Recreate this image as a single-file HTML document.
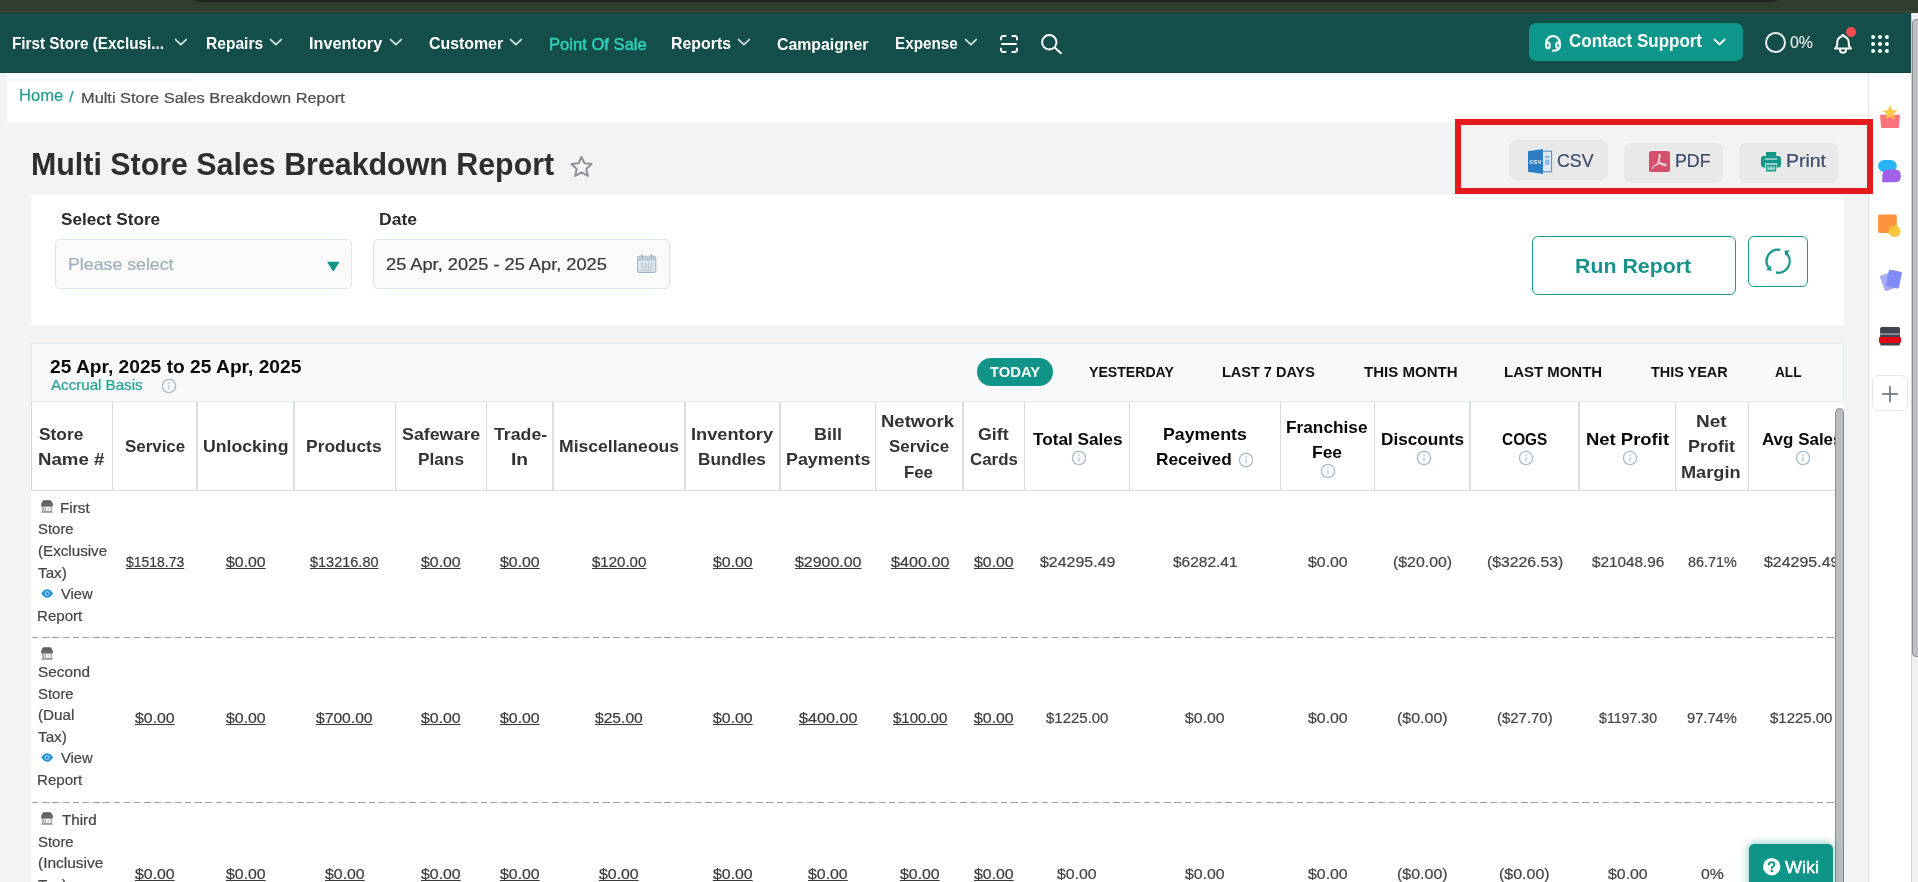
<!DOCTYPE html>
<html><head><meta charset="utf-8"><title>Multi Store Sales Breakdown Report</title>
<style>
*{box-sizing:border-box;margin:0;padding:0}
html,body{width:1918px;height:882px;overflow:hidden;background:#f3f3f3;font-family:"Liberation Sans",sans-serif;}
#root{position:relative;width:1918px;height:882px;overflow:hidden;will-change:transform}
.a{position:absolute}
.t{position:absolute;white-space:pre;line-height:1;transform-origin:0 0;display:block}
svg{position:absolute;overflow:visible}
</style></head><body><div id="root">
<div class="a" style="left:0;top:0;width:1918px;height:13px;background:#2f3d2c"></div>
<div class="a" style="left:192px;top:-6.5px;width:1588px;height:8.5px;background:#1b2519;border-radius:0 0 10px 10px"></div>
<div class="a" style="left:0;top:11px;width:1918px;height:1px;background:#42493f"></div>
<div class="a" style="left:0;top:13px;width:1911px;height:60px;background:#144e4a"></div>
<span class="t" style="left:12.14px;top:35.00px;font-size:17px;font-weight:bold;color:#fff;transform:scaleX(0.8992);">First Store (Exclusi...</span>
<span class="t" style="left:205.53px;top:35.00px;font-size:17px;font-weight:bold;color:#fff;transform:scaleX(0.9157);">Repairs</span>
<span class="t" style="left:308.68px;top:35.00px;font-size:17px;font-weight:bold;color:#fff;transform:scaleX(0.9568);">Inventory</span>
<span class="t" style="left:428.70px;top:35.00px;font-size:17px;font-weight:bold;color:#fff;transform:scaleX(0.9341);">Customer</span>
<span class="t" style="left:548.90px;top:36.00px;font-size:17px;font-weight:normal;color:#2fd3bd;transform:scaleX(0.9761);-webkit-text-stroke:0.45px #2fd3bd;">Point Of Sale</span>
<span class="t" style="left:671.21px;top:35.00px;font-size:17px;font-weight:bold;color:#fff;transform:scaleX(0.9347);">Reports</span>
<span class="t" style="left:777.21px;top:36.00px;font-size:17px;font-weight:bold;color:#fff;transform:scaleX(0.9305);">Campaigner</span>
<span class="t" style="left:894.65px;top:35.00px;font-size:17px;font-weight:bold;color:#fff;transform:scaleX(0.8971);">Expense</span>
<svg style="left:175.3px;top:39.2px" width="11.8" height="6.4" viewBox="0 0 11.8 6.4"><polyline points="0.6,0.6 5.9,5.6000000000000005 11.200000000000001,0.6" fill="none" stroke="#cddcda" stroke-width="1.9" stroke-linecap="round" stroke-linejoin="round"/></svg>
<svg style="left:270.3px;top:39.2px" width="11.8" height="6.4" viewBox="0 0 11.8 6.4"><polyline points="0.6,0.6 5.9,5.6000000000000005 11.200000000000001,0.6" fill="none" stroke="#cddcda" stroke-width="1.9" stroke-linecap="round" stroke-linejoin="round"/></svg>
<svg style="left:389.8px;top:39.2px" width="11.8" height="6.4" viewBox="0 0 11.8 6.4"><polyline points="0.6,0.6 5.9,5.6000000000000005 11.200000000000001,0.6" fill="none" stroke="#cddcda" stroke-width="1.9" stroke-linecap="round" stroke-linejoin="round"/></svg>
<svg style="left:510.3px;top:39.2px" width="11.8" height="6.4" viewBox="0 0 11.8 6.4"><polyline points="0.6,0.6 5.9,5.6000000000000005 11.200000000000001,0.6" fill="none" stroke="#cddcda" stroke-width="1.9" stroke-linecap="round" stroke-linejoin="round"/></svg>
<svg style="left:738.1px;top:39.2px" width="11.8" height="6.4" viewBox="0 0 11.8 6.4"><polyline points="0.6,0.6 5.9,5.6000000000000005 11.200000000000001,0.6" fill="none" stroke="#cddcda" stroke-width="1.9" stroke-linecap="round" stroke-linejoin="round"/></svg>
<svg style="left:965.1px;top:39.2px" width="11.8" height="6.4" viewBox="0 0 11.8 6.4"><polyline points="0.6,0.6 5.9,5.6000000000000005 11.200000000000001,0.6" fill="none" stroke="#cddcda" stroke-width="1.9" stroke-linecap="round" stroke-linejoin="round"/></svg>
<svg style="left:1000px;top:35px" width="18" height="18" viewBox="0 0 18 18" fill="none" stroke="#fff" stroke-width="1.9" stroke-linecap="round" stroke-linejoin="round"><path d="M1 4.6V3.4Q1 1 3.4 1H5.6M12.4 1H14.6Q17 1 17 3.4V4.6M17 13.4V14.6Q17 17 14.6 17H12.4M5.6 17H3.4Q1 17 1 14.6V13.4M2 9H16"/></svg>
<svg style="left:1041px;top:33.6px" width="21" height="20" viewBox="0 0 21 20" fill="none" stroke="#fff" stroke-width="2" stroke-linecap="round"><circle cx="8.3" cy="8.3" r="7.2"/><path d="M13.6 13.6L20 19.2"/></svg>
<div class="a" style="left:1529px;top:22.7px;width:214px;height:38px;background:#0f968a;border-radius:7px"></div>
<svg style="left:1545px;top:34.7px" width="16" height="17" viewBox="0 0 16 17" fill="none" stroke="#fff" stroke-linecap="round" stroke-linejoin="round"><path d="M1.3 9V7.7A6.7 6.7 0 0 1 14.7 7.7V9" stroke-width="2.2"/><rect x="1.15" y="7.5" width="3.5" height="5.7" rx="1.75" stroke-width="2"/><rect x="11.35" y="7.5" width="3.5" height="5.7" rx="1.75" stroke-width="2"/><path d="M14.2 13.4Q13.4 15.7 7.7 15.7" stroke-width="1.9"/></svg>
<span class="t" style="left:1569.27px;top:32.00px;font-size:18px;font-weight:bold;color:#fff;transform:scaleX(0.9435);">Contact Support</span>
<svg style="left:1713.7px;top:39.4px" width="11.2" height="6.2" viewBox="0 0 11.2 6.2"><polyline points="0.6,0.6 5.6,5.4 10.6,0.6" fill="none" stroke="#fff" stroke-width="2" stroke-linecap="round" stroke-linejoin="round"/></svg>
<div class="a" style="left:1765px;top:32.2px;width:21px;height:21px;border:2.7px solid #eceff3;border-radius:50%"></div>
<span class="t" style="left:1789.60px;top:34.00px;font-size:16.4px;font-weight:normal;color:#dde4e2;transform:scaleX(0.9691);-webkit-text-stroke:0.2px #dde4e2;">0%</span>
<svg style="left:1834px;top:32.6px" width="18" height="21" viewBox="0 0 18 21" fill="none" stroke="#fff" stroke-width="2" stroke-linecap="round" stroke-linejoin="round"><path d="M1.1 15.5L3.2 12.6V9.8C3.2 6.6 5 4.4 7.6 3.5C7.5 1.5 10.3 1.5 10.2 3.5C12.9 4.4 14.8 6.6 14.8 9.8V12.6L16.9 15.5Z"/><path d="M5.9 16.7A3.1 3.1 0 0 0 12.1 16.7" stroke-width="1.9"/></svg>
<div class="a" style="left:1845.6px;top:26.6px;width:10.8px;height:10.8px;background:#f84b50;border-radius:50%"></div>
<svg style="left:0;top:0" width="1918" height="80" viewBox="0 0 1918 80" fill="#fff"><circle cx="1873.1" cy="37.1" r="2"/><circle cx="1873.1" cy="44" r="2"/><circle cx="1873.1" cy="51" r="2"/><circle cx="1880" cy="37.1" r="2"/><circle cx="1880" cy="44" r="2"/><circle cx="1880" cy="51" r="2"/><circle cx="1886.9" cy="37.1" r="2"/><circle cx="1886.9" cy="44" r="2"/><circle cx="1886.9" cy="51" r="2"/></svg>
<div class="a" style="left:7px;top:72.8px;width:1862px;height:49.2px;background:#fff"></div>
<div class="a" style="left:193px;top:73px;width:1675px;height:5px;background:linear-gradient(rgba(0,0,0,0.04),rgba(0,0,0,0))"></div><div class="a" style="left:7px;top:79px;width:186px;height:5px;background:linear-gradient(rgba(0,0,0,0.035),rgba(0,0,0,0))"></div><div class="a" style="left:0;top:71.8px;width:1911px;height:1.2px;background:#10433f"></div>
<span class="t" style="left:18.50px;top:88.00px;font-size:15.6px;font-weight:normal;color:#219f94;transform:scaleX(1.0638);-webkit-text-stroke:0.22px #219f94;">Home</span>
<span class="t" style="left:69.40px;top:89.00px;font-size:15.4px;font-weight:normal;color:#219f94;transform:scaleX(1.0620);-webkit-text-stroke:0.22px #219f94;">/</span>
<span class="t" style="left:80.52px;top:90.00px;font-size:15.4px;font-weight:normal;color:#4d4d4d;transform:scaleX(1.0632);-webkit-text-stroke:0.22px #4d4d4d;">Multi Store Sales Breakdown Report</span>
<span class="t" style="left:31.30px;top:149.00px;font-size:30.5px;font-weight:bold;color:#2e2e2e;transform:scaleX(0.9957);">Multi Store Sales Breakdown Report</span>
<svg style="left:570px;top:155.3px" width="23" height="22.6" viewBox="0 0 23 22" fill="none" stroke="#8b9098" stroke-width="2" stroke-linejoin="round"><path d="M11.5 1.5L14.5 8L21.6 8.8L16.3 13.6L17.8 20.6L11.5 17L5.2 20.6L6.7 13.6L1.4 8.8L8.5 8Z"/></svg>
<div class="a" style="left:1509px;top:140px;width:99px;height:40px;background:#e9e9e9;border-radius:7px"></div>
<div class="a" style="left:1624px;top:143px;width:99px;height:39.6px;background:#e9e9e9;border-radius:7px"></div>
<div class="a" style="left:1739px;top:143px;width:99px;height:39.6px;background:#e9e9e9;border-radius:7px"></div>
<svg style="left:1528px;top:148.8px" width="24.2" height="25" viewBox="0 0 24.2 25"><rect x="14" y="2.2" width="9.6" height="20.6" fill="#dfe9f5" stroke="#4a90d2" stroke-width="1"/><rect x="17" y="7" width="4.5" height="1.6" fill="#6ea6dc"/><rect x="17" y="10.5" width="4.5" height="5.5" fill="#8fbbe6"/><path d="M0 2.3L15 0V25L0 22.7Z" fill="#2d7dc4"/><text x="1.2" y="15.4" font-family="Liberation Sans" font-weight="bold" font-size="7.6" fill="#d8e8f7" textLength="12.4" lengthAdjust="spacingAndGlyphs">csv</text></svg>
<span class="t" style="left:1557.17px;top:152.00px;font-size:18px;font-weight:normal;color:#3c4b6c;transform:scaleX(0.9875);-webkit-text-stroke:0.22px #3c4b6c;">CSV</span>
<svg style="left:1649px;top:151px" width="21" height="21" viewBox="0 0 21 21"><rect width="21" height="21" rx="2.6" fill="#d5506b"/><path d="M3.6 17.4C3 16.2 6 14.4 8 13.4C9.4 10.8 10.6 7.2 10 4.6C9.8 3.4 11.4 3.4 11.2 5C10.8 8 9.6 10.8 8 13.4M8 13.4C10 12.6 12.6 12.2 15 12.8C17.4 13.4 17.8 14.6 16.4 14.8C14.4 15 12 13.4 10.4 10.6" fill="none" stroke="#fbe9ed" stroke-width="1.1" stroke-linecap="round" stroke-linejoin="round"/></svg>
<span class="t" style="left:1674.71px;top:152.00px;font-size:18px;font-weight:normal;color:#3c4b6c;transform:scaleX(0.9852);-webkit-text-stroke:0.22px #3c4b6c;">PDF</span>
<svg style="left:1760.9px;top:151.9px" width="20" height="19.4" viewBox="0 0 20 19.4"><rect x="5" y="0" width="10.2" height="6.2" fill="#13978a"/><rect x="0" y="4" width="20" height="11.4" rx="2.7" fill="#13978a"/><rect x="3.8" y="6.1" width="12.4" height="1.9" fill="#8ccdc5"/><rect x="3.8" y="11.1" width="12.4" height="4.4" fill="#9bd2cb"/><rect x="5" y="13" width="10.2" height="6.4" rx="0.6" fill="#13978a"/><rect x="6" y="14.1" width="8.2" height="4" fill="#7cc4bb"/><rect x="6.4" y="16.5" width="7.4" height="1" fill="#b4dfd9"/></svg>
<span class="t" style="left:1785.78px;top:152.00px;font-size:18px;font-weight:normal;color:#3c4b6c;transform:scaleX(1.0795);-webkit-text-stroke:0.22px #3c4b6c;">Print</span>
<div class="a" style="left:31px;top:195px;width:1813px;height:129.8px;background:#fff"></div>
<span class="t" style="left:61.43px;top:211.00px;font-size:17px;font-weight:bold;color:#2b2b2b;transform:scaleX(1.0084);">Select Store</span>
<span class="t" style="left:378.70px;top:211.00px;font-size:17px;font-weight:bold;color:#2b2b2b;transform:scaleX(1.0322);">Date</span>
<div class="a" style="left:55px;top:239px;width:297px;height:49.6px;background:#fafafa;border:1px solid #dbe5f5;border-radius:5px"></div>
<div class="a" style="left:373px;top:239px;width:297px;height:49.6px;background:#fafafa;border:1px solid #dbe5f5;border-radius:5px"></div>
<span class="t" style="left:67.71px;top:256.00px;font-size:17px;font-weight:normal;color:#9db2be;transform:scaleX(1.0437);-webkit-text-stroke:0.22px #9db2be;">Please select</span>
<svg style="left:326.7px;top:260.8px" width="12.6" height="10.5" viewBox="0 0 12.6 9.8" preserveAspectRatio="none"><path d="M1 0.6H11.6Q12.6 0.6 12 1.6L7 9.2Q6.3 10 5.6 9.2L0.6 1.6Q0 0.6 1 0.6Z" fill="#149487"/></svg>
<span class="t" style="left:386.05px;top:256.00px;font-size:17px;font-weight:normal;color:#383838;transform:scaleX(1.0719);-webkit-text-stroke:0.22px #383838;">25 Apr, 2025 - 25 Apr, 2025</span>
<svg style="left:636.8px;top:254px" width="19.4" height="19" viewBox="0 0 19.4 19"><rect x="0.6" y="2.2" width="18.2" height="16.2" rx="1.6" fill="#e3eaf0" stroke="#9fb3c3" stroke-width="1.1"/><rect x="0.6" y="2.2" width="18.2" height="4.6" fill="#bccbd6"/><rect x="4.2" y="0.3" width="1.4" height="3.6" fill="#9fb3c3"/><rect x="13.8" y="0.3" width="1.4" height="3.6" fill="#9fb3c3"/><path d="M2.6 10H16.8M2.6 13H16.8M2.6 16H16.8M5.6 8V17.4M8.6 8V17.4M11.6 8V17.4M14.4 8V17.4" stroke="#b9c8d4" stroke-width="0.9" fill="none"/></svg>
<div class="a" style="left:1532px;top:236px;width:204px;height:58.6px;background:#fff;border:1.3px solid #1a978a;border-radius:6px"></div>
<span class="t" style="left:1575.37px;top:255.00px;font-size:21px;font-weight:bold;color:#17938a;transform:scaleX(1.0159);">Run Report</span>
<div class="a" style="left:1748.3px;top:236px;width:59.5px;height:50.8px;background:#fff;border:1.3px solid #1a978a;border-radius:6px"></div>
<svg style="left:1764.5px;top:247.6px" width="27" height="26.4" viewBox="0 0 27 26.4" fill="none" stroke="#1a978a" stroke-width="2.3"><path d="M15.3 1.9A11.5 11.5 0 0 0 3.7 19.8"/><path d="M10.9 24.5A11.5 11.5 0 0 0 21.6 5.4"/><path d="M1.4 21.8L6.5 22.9L6 17.5Z" fill="#1a978a" stroke="none"/><path d="M19.5 2.4L24.9 2.6L20.3 7.7Z" fill="#1a978a" stroke="none"/></svg>
<div class="a" style="left:31px;top:343px;width:1813px;height:59px;background:#f8f9fb;border:1px solid #e1e8ef"></div>
<span class="t" style="left:50.30px;top:358.00px;font-size:18px;font-weight:bold;color:#0b0b0b;transform:scaleX(1.0660);">25 Apr, 2025 to 25 Apr, 2025</span>
<span class="t" style="left:50.90px;top:378.00px;font-size:14.5px;font-weight:normal;color:#27a195;transform:scaleX(1.0425);-webkit-text-stroke:0.22px #27a195;">Accrual Basis</span>
<svg style="left:160.9px;top:378.2px" width="16" height="16" viewBox="0 0 16 16"><circle cx="8" cy="8" r="6.6" fill="none" stroke="#a9bccb" stroke-width="1.3"/><rect x="7.35" y="7" width="1.3" height="4.6" fill="#b6c6d3"/><circle cx="8" cy="5.1" r="0.95" fill="#b6c6d3"/></svg>
<div class="a" style="left:976.7px;top:358.1px;width:76.4px;height:27.8px;background:#119488;border-radius:14px"></div>
<span class="t" style="left:989.80px;top:365.00px;font-size:14.2px;font-weight:bold;color:#fff;transform:scaleX(1.0419);">TODAY</span>
<span class="t" style="left:1088.98px;top:365.00px;font-size:14.2px;font-weight:bold;color:#111;transform:scaleX(0.9939);">YESTERDAY</span>
<span class="t" style="left:1222.49px;top:365.00px;font-size:14.2px;font-weight:bold;color:#111;transform:scaleX(1.0217);">LAST 7 DAYS</span>
<span class="t" style="left:1363.90px;top:365.00px;font-size:14.2px;font-weight:bold;color:#111;transform:scaleX(1.0605);">THIS MONTH</span>
<span class="t" style="left:1504.46px;top:365.00px;font-size:14.2px;font-weight:bold;color:#111;transform:scaleX(1.0553);">LAST MONTH</span>
<span class="t" style="left:1650.50px;top:365.00px;font-size:14.2px;font-weight:bold;color:#111;transform:scaleX(1.0163);">THIS YEAR</span>
<span class="t" style="left:1775.49px;top:365.00px;font-size:14.2px;font-weight:bold;color:#111;transform:scaleX(0.9617);">ALL</span>
<div class="a" style="left:31px;top:402px;width:1812.6px;height:480px;background:#fff;overflow:hidden">
</div>
<div class="a" style="left:196px;top:402px;width:2px;height:88px;background:#dcdcdc"></div>
<div class="a" style="left:293px;top:402px;width:2px;height:88px;background:#dcdcdc"></div>
<div class="a" style="left:552px;top:402px;width:2px;height:88px;background:#dcdcdc"></div>
<div class="a" style="left:684px;top:402px;width:2px;height:88px;background:#dcdcdc"></div>
<div class="a" style="left:779px;top:402px;width:2px;height:88px;background:#dcdcdc"></div>
<div class="a" style="left:962px;top:402px;width:2px;height:88px;background:#dcdcdc"></div>
<div class="a" style="left:1469px;top:402px;width:2px;height:88px;background:#dcdcdc"></div>
<div class="a" style="left:1578px;top:402px;width:2px;height:88px;background:#dcdcdc"></div>
<div class="a" style="left:31px;top:402px;width:1px;height:88px;background:#d8d9db"></div>
<div class="a" style="left:112px;top:402px;width:1px;height:88px;background:#d8d9db"></div>
<div class="a" style="left:395px;top:402px;width:1px;height:88px;background:#d8d9db"></div>
<div class="a" style="left:486px;top:402px;width:1px;height:88px;background:#d8d9db"></div>
<div class="a" style="left:875px;top:402px;width:1px;height:88px;background:#d8d9db"></div>
<div class="a" style="left:1024px;top:402px;width:1px;height:88px;background:#d8d9db"></div>
<div class="a" style="left:1129px;top:402px;width:1px;height:88px;background:#d8d9db"></div>
<div class="a" style="left:1280px;top:402px;width:1px;height:88px;background:#d8d9db"></div>
<div class="a" style="left:1374px;top:402px;width:1px;height:88px;background:#d8d9db"></div>
<div class="a" style="left:1675px;top:402px;width:1px;height:88px;background:#d8d9db"></div>
<div class="a" style="left:1748px;top:402px;width:1px;height:88px;background:#d8d9db"></div>
<div class="a" style="left:31px;top:490px;width:1804px;height:1px;background:#dcdcdc"></div>
<div class="a" style="left:32px;top:637px;width:1803px;height:1px;background:repeating-linear-gradient(90deg,#9c9c9c 0,#9c9c9c 6.4px,transparent 6.4px,transparent 10.2px)"></div>
<div class="a" style="left:32px;top:802px;width:1803px;height:1px;background:repeating-linear-gradient(90deg,#9c9c9c 0,#9c9c9c 6.4px,transparent 6.4px,transparent 10.2px)"></div>
<span class="t" style="left:38.53px;top:426.00px;font-size:17px;font-weight:bold;color:#333;transform:scaleX(1.0218);">Store</span>
<span class="t" style="left:37.63px;top:451.00px;font-size:17px;font-weight:bold;color:#333;transform:scaleX(1.0969);">Name #</span>
<span class="t" style="left:124.74px;top:438.00px;font-size:17px;font-weight:bold;color:#333;transform:scaleX(0.9949);">Service</span>
<span class="t" style="left:203.17px;top:438.00px;font-size:17px;font-weight:bold;color:#333;transform:scaleX(1.0400);">Unlocking</span>
<span class="t" style="left:306.41px;top:438.00px;font-size:17px;font-weight:bold;color:#333;transform:scaleX(1.0261);">Products</span>
<span class="t" style="left:401.72px;top:426.00px;font-size:17px;font-weight:bold;color:#333;transform:scaleX(1.0477);">Safeware</span>
<span class="t" style="left:417.72px;top:451.00px;font-size:17px;font-weight:bold;color:#333;transform:scaleX(1.0137);">Plans</span>
<span class="t" style="left:493.80px;top:426.00px;font-size:17px;font-weight:bold;color:#333;transform:scaleX(1.0416);">Trade-</span>
<span class="t" style="left:511.29px;top:451.00px;font-size:17px;font-weight:bold;color:#333;transform:scaleX(1.1344);">In</span>
<span class="t" style="left:558.90px;top:438.00px;font-size:17px;font-weight:bold;color:#333;transform:scaleX(1.0336);">Miscellaneous</span>
<span class="t" style="left:690.86px;top:426.00px;font-size:17px;font-weight:bold;color:#333;transform:scaleX(1.0720);">Inventory</span>
<span class="t" style="left:698.43px;top:451.00px;font-size:17px;font-weight:bold;color:#333;transform:scaleX(1.0106);">Bundles</span>
<span class="t" style="left:813.88px;top:426.00px;font-size:17px;font-weight:bold;color:#333;transform:scaleX(1.0583);">Bill</span>
<span class="t" style="left:785.88px;top:451.00px;font-size:17px;font-weight:bold;color:#333;transform:scaleX(1.0501);">Payments</span>
<span class="t" style="left:881.34px;top:413.00px;font-size:17px;font-weight:bold;color:#333;transform:scaleX(1.0890);">Network</span>
<span class="t" style="left:888.54px;top:438.00px;font-size:17px;font-weight:bold;color:#333;transform:scaleX(0.9932);">Service</span>
<span class="t" style="left:903.95px;top:464.00px;font-size:17px;font-weight:bold;color:#333;transform:scaleX(0.9889);">Fee</span>
<span class="t" style="left:978.24px;top:426.00px;font-size:17px;font-weight:bold;color:#333;transform:scaleX(1.0470);">Gift</span>
<span class="t" style="left:970.27px;top:451.00px;font-size:17px;font-weight:bold;color:#333;transform:scaleX(0.9943);">Cards</span>
<span class="t" style="left:1033.00px;top:431.00px;font-size:17px;font-weight:bold;color:#060606;transform:scaleX(1.0113);">Total Sales</span>
<svg style="left:1070.8px;top:450.3px" width="16" height="16" viewBox="0 0 16 16"><circle cx="8" cy="8" r="6.6" fill="none" stroke="#a9bccb" stroke-width="1.3"/><rect x="7.35" y="7" width="1.3" height="4.6" fill="#b6c6d3"/><circle cx="8" cy="5.1" r="0.95" fill="#b6c6d3"/></svg>
<span class="t" style="left:1163.19px;top:426.00px;font-size:17px;font-weight:bold;color:#060606;transform:scaleX(1.0437);">Payments</span>
<span class="t" style="left:1155.92px;top:451.00px;font-size:17px;font-weight:bold;color:#060606;transform:scaleX(1.0137);">Received</span>
<svg style="left:1237.5px;top:452px" width="16" height="16" viewBox="0 0 16 16"><circle cx="8" cy="8" r="6.6" fill="none" stroke="#a9bccb" stroke-width="1.3"/><rect x="7.35" y="7" width="1.3" height="4.6" fill="#b6c6d3"/><circle cx="8" cy="5.1" r="0.95" fill="#b6c6d3"/></svg>
<span class="t" style="left:1286.42px;top:419.00px;font-size:17px;font-weight:bold;color:#060606;transform:scaleX(1.0149);">Franchise</span>
<span class="t" style="left:1312.21px;top:444.00px;font-size:17px;font-weight:bold;color:#060606;transform:scaleX(1.0249);">Fee</span>
<svg style="left:1320.3px;top:463.3px" width="16" height="16" viewBox="0 0 16 16"><circle cx="8" cy="8" r="6.6" fill="none" stroke="#a9bccb" stroke-width="1.3"/><rect x="7.35" y="7" width="1.3" height="4.6" fill="#b6c6d3"/><circle cx="8" cy="5.1" r="0.95" fill="#b6c6d3"/></svg>
<span class="t" style="left:1380.93px;top:431.00px;font-size:17px;font-weight:bold;color:#060606;transform:scaleX(1.0109);">Discounts</span>
<svg style="left:1415.8px;top:450.3px" width="16" height="16" viewBox="0 0 16 16"><circle cx="8" cy="8" r="6.6" fill="none" stroke="#a9bccb" stroke-width="1.3"/><rect x="7.35" y="7" width="1.3" height="4.6" fill="#b6c6d3"/><circle cx="8" cy="5.1" r="0.95" fill="#b6c6d3"/></svg>
<span class="t" style="left:1502.02px;top:431.00px;font-size:17px;font-weight:bold;color:#060606;transform:scaleX(0.9066);">COGS</span>
<svg style="left:1517.8px;top:450.3px" width="16" height="16" viewBox="0 0 16 16"><circle cx="8" cy="8" r="6.6" fill="none" stroke="#a9bccb" stroke-width="1.3"/><rect x="7.35" y="7" width="1.3" height="4.6" fill="#b6c6d3"/><circle cx="8" cy="5.1" r="0.95" fill="#b6c6d3"/></svg>
<span class="t" style="left:1585.85px;top:431.00px;font-size:17px;font-weight:bold;color:#060606;transform:scaleX(1.0855);">Net Profit</span>
<svg style="left:1621.5px;top:450.3px" width="16" height="16" viewBox="0 0 16 16"><circle cx="8" cy="8" r="6.6" fill="none" stroke="#a9bccb" stroke-width="1.3"/><rect x="7.35" y="7" width="1.3" height="4.6" fill="#b6c6d3"/><circle cx="8" cy="5.1" r="0.95" fill="#b6c6d3"/></svg>
<span class="t" style="left:1695.81px;top:413.00px;font-size:17px;font-weight:bold;color:#333;transform:scaleX(1.1163);">Net</span>
<span class="t" style="left:1687.68px;top:438.00px;font-size:17px;font-weight:bold;color:#333;transform:scaleX(1.0569);">Profit</span>
<span class="t" style="left:1681.37px;top:464.00px;font-size:17px;font-weight:bold;color:#333;transform:scaleX(1.0680);">Margin</span>
<span class="t" style="left:1761.73px;top:431.00px;font-size:17px;font-weight:bold;color:#060606;transform:scaleX(0.9978);">Avg Sales</span>
<svg style="left:1794.5px;top:450.3px" width="16" height="16" viewBox="0 0 16 16"><circle cx="8" cy="8" r="6.6" fill="none" stroke="#a9bccb" stroke-width="1.3"/><rect x="7.35" y="7" width="1.3" height="4.6" fill="#b6c6d3"/><circle cx="8" cy="5.1" r="0.95" fill="#b6c6d3"/></svg>
<span class="t" style="left:126.05px;top:554.00px;font-size:15.4px;font-weight:normal;color:#3b3b3b;transform:scaleX(0.9071);text-decoration:underline;text-decoration-thickness:1px;text-underline-offset:0.7px;-webkit-text-stroke:0.22px #3b3b3b;">$1518.73</span>
<span class="t" style="left:225.85px;top:554.00px;font-size:15.4px;font-weight:normal;color:#3b3b3b;transform:scaleX(1.0300);text-decoration:underline;text-decoration-thickness:1px;text-underline-offset:0.7px;-webkit-text-stroke:0.22px #3b3b3b;">$0.00</span>
<span class="t" style="left:310.40px;top:554.00px;font-size:15.4px;font-weight:normal;color:#3b3b3b;transform:scaleX(0.9418);text-decoration:underline;text-decoration-thickness:1px;text-underline-offset:0.7px;-webkit-text-stroke:0.22px #3b3b3b;">$13216.80</span>
<span class="t" style="left:421.15px;top:554.00px;font-size:15.4px;font-weight:normal;color:#3b3b3b;transform:scaleX(1.0300);text-decoration:underline;text-decoration-thickness:1px;text-underline-offset:0.7px;-webkit-text-stroke:0.22px #3b3b3b;">$0.00</span>
<span class="t" style="left:500.15px;top:554.00px;font-size:15.4px;font-weight:normal;color:#3b3b3b;transform:scaleX(1.0300);text-decoration:underline;text-decoration-thickness:1px;text-underline-offset:0.7px;-webkit-text-stroke:0.22px #3b3b3b;">$0.00</span>
<span class="t" style="left:592.00px;top:554.00px;font-size:15.4px;font-weight:normal;color:#3b3b3b;transform:scaleX(0.9768);text-decoration:underline;text-decoration-thickness:1px;text-underline-offset:0.7px;-webkit-text-stroke:0.22px #3b3b3b;">$120.00</span>
<span class="t" style="left:712.85px;top:554.00px;font-size:15.4px;font-weight:normal;color:#3b3b3b;transform:scaleX(1.0300);text-decoration:underline;text-decoration-thickness:1px;text-underline-offset:0.7px;-webkit-text-stroke:0.22px #3b3b3b;">$0.00</span>
<span class="t" style="left:794.95px;top:554.00px;font-size:15.4px;font-weight:normal;color:#3b3b3b;transform:scaleX(1.0353);text-decoration:underline;text-decoration-thickness:1px;text-underline-offset:0.7px;-webkit-text-stroke:0.22px #3b3b3b;">$2900.00</span>
<span class="t" style="left:890.50px;top:554.00px;font-size:15.4px;font-weight:normal;color:#3b3b3b;transform:scaleX(1.0491);text-decoration:underline;text-decoration-thickness:1px;text-underline-offset:0.7px;-webkit-text-stroke:0.22px #3b3b3b;">$400.00</span>
<span class="t" style="left:974.15px;top:554.00px;font-size:15.4px;font-weight:normal;color:#3b3b3b;transform:scaleX(1.0300);text-decoration:underline;text-decoration-thickness:1px;text-underline-offset:0.7px;-webkit-text-stroke:0.22px #3b3b3b;">$0.00</span>
<span class="t" style="left:1039.60px;top:554.00px;font-size:15.4px;font-weight:normal;color:#444;transform:scaleX(1.0364);-webkit-text-stroke:0.22px #444;">$24295.49</span>
<span class="t" style="left:1173.05px;top:554.00px;font-size:15.4px;font-weight:normal;color:#444;transform:scaleX(1.0046);-webkit-text-stroke:0.22px #444;">$6282.41</span>
<span class="t" style="left:1307.85px;top:554.00px;font-size:15.4px;font-weight:normal;color:#444;transform:scaleX(1.0300);-webkit-text-stroke:0.22px #444;">$0.00</span>
<span class="t" style="left:1392.76px;top:554.00px;font-size:15.4px;font-weight:normal;color:#444;transform:scaleX(1.0315);-webkit-text-stroke:0.22px #444;">($20.00)</span>
<span class="t" style="left:1486.61px;top:554.00px;font-size:15.4px;font-weight:normal;color:#444;transform:scaleX(1.0237);-webkit-text-stroke:0.22px #444;">($3226.53)</span>
<span class="t" style="left:1591.60px;top:554.00px;font-size:15.4px;font-weight:normal;color:#444;transform:scaleX(0.9948);-webkit-text-stroke:0.22px #444;">$21048.96</span>
<span class="t" style="left:1687.85px;top:554.00px;font-size:15.4px;font-weight:normal;color:#444;transform:scaleX(0.9319);-webkit-text-stroke:0.22px #444;">86.71%</span>
<span class="t" style="left:1763.90px;top:554.00px;font-size:15.4px;font-weight:normal;color:#444;transform:scaleX(1.0364);-webkit-text-stroke:0.22px #444;">$24295.49</span>
<span class="t" style="left:135.25px;top:710.00px;font-size:15.4px;font-weight:normal;color:#3b3b3b;transform:scaleX(1.0300);text-decoration:underline;text-decoration-thickness:1px;text-underline-offset:0.7px;-webkit-text-stroke:0.22px #3b3b3b;">$0.00</span>
<span class="t" style="left:225.85px;top:710.00px;font-size:15.4px;font-weight:normal;color:#3b3b3b;transform:scaleX(1.0300);text-decoration:underline;text-decoration-thickness:1px;text-underline-offset:0.7px;-webkit-text-stroke:0.22px #3b3b3b;">$0.00</span>
<span class="t" style="left:316.40px;top:710.00px;font-size:15.4px;font-weight:normal;color:#3b3b3b;transform:scaleX(1.0166);text-decoration:underline;text-decoration-thickness:1px;text-underline-offset:0.7px;-webkit-text-stroke:0.22px #3b3b3b;">$700.00</span>
<span class="t" style="left:421.15px;top:710.00px;font-size:15.4px;font-weight:normal;color:#3b3b3b;transform:scaleX(1.0300);text-decoration:underline;text-decoration-thickness:1px;text-underline-offset:0.7px;-webkit-text-stroke:0.22px #3b3b3b;">$0.00</span>
<span class="t" style="left:500.15px;top:710.00px;font-size:15.4px;font-weight:normal;color:#3b3b3b;transform:scaleX(1.0300);text-decoration:underline;text-decoration-thickness:1px;text-underline-offset:0.7px;-webkit-text-stroke:0.22px #3b3b3b;">$0.00</span>
<span class="t" style="left:595.30px;top:710.00px;font-size:15.4px;font-weight:normal;color:#3b3b3b;transform:scaleX(1.0146);text-decoration:underline;text-decoration-thickness:1px;text-underline-offset:0.7px;-webkit-text-stroke:0.22px #3b3b3b;">$25.00</span>
<span class="t" style="left:712.85px;top:710.00px;font-size:15.4px;font-weight:normal;color:#3b3b3b;transform:scaleX(1.0300);text-decoration:underline;text-decoration-thickness:1px;text-underline-offset:0.7px;-webkit-text-stroke:0.22px #3b3b3b;">$0.00</span>
<span class="t" style="left:799.00px;top:710.00px;font-size:15.4px;font-weight:normal;color:#3b3b3b;transform:scaleX(1.0491);text-decoration:underline;text-decoration-thickness:1px;text-underline-offset:0.7px;-webkit-text-stroke:0.22px #3b3b3b;">$400.00</span>
<span class="t" style="left:892.50px;top:710.00px;font-size:15.4px;font-weight:normal;color:#3b3b3b;transform:scaleX(0.9768);text-decoration:underline;text-decoration-thickness:1px;text-underline-offset:0.7px;-webkit-text-stroke:0.22px #3b3b3b;">$100.00</span>
<span class="t" style="left:974.15px;top:710.00px;font-size:15.4px;font-weight:normal;color:#3b3b3b;transform:scaleX(1.0300);text-decoration:underline;text-decoration-thickness:1px;text-underline-offset:0.7px;-webkit-text-stroke:0.22px #3b3b3b;">$0.00</span>
<span class="t" style="left:1045.95px;top:710.00px;font-size:15.4px;font-weight:normal;color:#444;transform:scaleX(0.9726);-webkit-text-stroke:0.22px #444;">$1225.00</span>
<span class="t" style="left:1185.35px;top:710.00px;font-size:15.4px;font-weight:normal;color:#444;transform:scaleX(1.0300);-webkit-text-stroke:0.22px #444;">$0.00</span>
<span class="t" style="left:1307.85px;top:710.00px;font-size:15.4px;font-weight:normal;color:#444;transform:scaleX(1.0300);-webkit-text-stroke:0.22px #444;">$0.00</span>
<span class="t" style="left:1397.00px;top:710.00px;font-size:15.4px;font-weight:normal;color:#444;transform:scaleX(1.0386);-webkit-text-stroke:0.22px #444;">($0.00)</span>
<span class="t" style="left:1496.90px;top:710.00px;font-size:15.4px;font-weight:normal;color:#444;transform:scaleX(0.9706);-webkit-text-stroke:0.22px #444;">($27.70)</span>
<span class="t" style="left:1598.65px;top:710.00px;font-size:15.4px;font-weight:normal;color:#444;transform:scaleX(0.9202);-webkit-text-stroke:0.22px #444;">$1197.30</span>
<span class="t" style="left:1687.16px;top:710.00px;font-size:15.4px;font-weight:normal;color:#444;transform:scaleX(0.9540);-webkit-text-stroke:0.22px #444;">97.74%</span>
<span class="t" style="left:1770.25px;top:710.00px;font-size:15.4px;font-weight:normal;color:#444;transform:scaleX(0.9726);-webkit-text-stroke:0.22px #444;">$1225.00</span>
<span class="t" style="left:135.25px;top:866.00px;font-size:15.4px;font-weight:normal;color:#3b3b3b;transform:scaleX(1.0300);text-decoration:underline;text-decoration-thickness:1px;text-underline-offset:0.7px;-webkit-text-stroke:0.22px #3b3b3b;">$0.00</span>
<span class="t" style="left:225.85px;top:866.00px;font-size:15.4px;font-weight:normal;color:#3b3b3b;transform:scaleX(1.0300);text-decoration:underline;text-decoration-thickness:1px;text-underline-offset:0.7px;-webkit-text-stroke:0.22px #3b3b3b;">$0.00</span>
<span class="t" style="left:324.85px;top:866.00px;font-size:15.4px;font-weight:normal;color:#3b3b3b;transform:scaleX(1.0300);text-decoration:underline;text-decoration-thickness:1px;text-underline-offset:0.7px;-webkit-text-stroke:0.22px #3b3b3b;">$0.00</span>
<span class="t" style="left:421.15px;top:866.00px;font-size:15.4px;font-weight:normal;color:#3b3b3b;transform:scaleX(1.0300);text-decoration:underline;text-decoration-thickness:1px;text-underline-offset:0.7px;-webkit-text-stroke:0.22px #3b3b3b;">$0.00</span>
<span class="t" style="left:500.15px;top:866.00px;font-size:15.4px;font-weight:normal;color:#3b3b3b;transform:scaleX(1.0300);text-decoration:underline;text-decoration-thickness:1px;text-underline-offset:0.7px;-webkit-text-stroke:0.22px #3b3b3b;">$0.00</span>
<span class="t" style="left:599.35px;top:866.00px;font-size:15.4px;font-weight:normal;color:#3b3b3b;transform:scaleX(1.0300);text-decoration:underline;text-decoration-thickness:1px;text-underline-offset:0.7px;-webkit-text-stroke:0.22px #3b3b3b;">$0.00</span>
<span class="t" style="left:712.85px;top:866.00px;font-size:15.4px;font-weight:normal;color:#3b3b3b;transform:scaleX(1.0300);text-decoration:underline;text-decoration-thickness:1px;text-underline-offset:0.7px;-webkit-text-stroke:0.22px #3b3b3b;">$0.00</span>
<span class="t" style="left:808.35px;top:866.00px;font-size:15.4px;font-weight:normal;color:#3b3b3b;transform:scaleX(1.0300);text-decoration:underline;text-decoration-thickness:1px;text-underline-offset:0.7px;-webkit-text-stroke:0.22px #3b3b3b;">$0.00</span>
<span class="t" style="left:899.85px;top:866.00px;font-size:15.4px;font-weight:normal;color:#3b3b3b;transform:scaleX(1.0300);text-decoration:underline;text-decoration-thickness:1px;text-underline-offset:0.7px;-webkit-text-stroke:0.22px #3b3b3b;">$0.00</span>
<span class="t" style="left:974.15px;top:866.00px;font-size:15.4px;font-weight:normal;color:#3b3b3b;transform:scaleX(1.0300);text-decoration:underline;text-decoration-thickness:1px;text-underline-offset:0.7px;-webkit-text-stroke:0.22px #3b3b3b;">$0.00</span>
<span class="t" style="left:1057.35px;top:866.00px;font-size:15.4px;font-weight:normal;color:#444;transform:scaleX(1.0300);-webkit-text-stroke:0.22px #444;">$0.00</span>
<span class="t" style="left:1185.35px;top:866.00px;font-size:15.4px;font-weight:normal;color:#444;transform:scaleX(1.0300);-webkit-text-stroke:0.22px #444;">$0.00</span>
<span class="t" style="left:1307.85px;top:866.00px;font-size:15.4px;font-weight:normal;color:#444;transform:scaleX(1.0300);-webkit-text-stroke:0.22px #444;">$0.00</span>
<span class="t" style="left:1397.00px;top:866.00px;font-size:15.4px;font-weight:normal;color:#444;transform:scaleX(1.0386);-webkit-text-stroke:0.22px #444;">($0.00)</span>
<span class="t" style="left:1499.40px;top:866.00px;font-size:15.4px;font-weight:normal;color:#444;transform:scaleX(1.0386);-webkit-text-stroke:0.22px #444;">($0.00)</span>
<span class="t" style="left:1607.85px;top:866.00px;font-size:15.4px;font-weight:normal;color:#444;transform:scaleX(1.0300);-webkit-text-stroke:0.22px #444;">$0.00</span>
<span class="t" style="left:1700.76px;top:866.00px;font-size:15.4px;font-weight:normal;color:#444;transform:scaleX(1.0273);-webkit-text-stroke:0.22px #444;">0%</span>
<span class="t" style="left:1781.65px;top:866.00px;font-size:15.4px;font-weight:normal;color:#444;transform:scaleX(1.0300);-webkit-text-stroke:0.22px #444;">$0.00</span>
<svg style="left:41.1px;top:500.2px" width="12" height="12.8" viewBox="0 0 12 12.8"><rect x="1.2" y="0.3" width="9.6" height="4" rx="1.8" fill="#5c5c5c"/><rect x="0.1" y="2.8" width="11.8" height="4" rx="1.1" fill="#686868"/><rect x="1.1" y="6.4" width="9.8" height="5.6" fill="#a9a9a9"/><rect x="2.9" y="7" width="1" height="4.4" fill="#e6e6e6"/><rect x="5" y="7.1" width="4.6" height="3.7" fill="#fff"/><rect x="6.6" y="8.1" width="1.5" height="1.5" fill="#b0b0b0"/><rect x="0.4" y="11.5" width="11.4" height="1.2" fill="#8c8c8c"/></svg>
<span class="t" style="left:60.30px;top:501.00px;font-size:14.6px;font-weight:normal;color:#454545;transform:scaleX(1.0480);-webkit-text-stroke:0.22px #454545;">First</span>
<span class="t" style="left:38.03px;top:522.00px;font-size:14.6px;font-weight:normal;color:#454545;transform:scaleX(1.0222);-webkit-text-stroke:0.22px #454545;">Store</span>
<span class="t" style="left:37.89px;top:544.00px;font-size:14.6px;font-weight:normal;color:#454545;transform:scaleX(1.0391);-webkit-text-stroke:0.22px #454545;">(Exclusive</span>
<span class="t" style="left:38.36px;top:566.00px;font-size:14.6px;font-weight:normal;color:#454545;transform:scaleX(1.0452);-webkit-text-stroke:0.22px #454545;">Tax)</span>
<svg style="left:40.9px;top:588.9px" width="12.4" height="9.1" viewBox="0 0 12.4 9.1"><path d="M0.2 4.55Q3 0.3 6.2 0.3Q9.4 0.3 12.2 4.55Q9.4 8.8 6.2 8.8Q3 8.8 0.2 4.55Z" fill="#1f93db"/><circle cx="6.1" cy="4.55" r="2.45" fill="#9fd2f2"/><circle cx="6.2" cy="4.6" r="1.25" fill="#1a86cf"/></svg>
<span class="t" style="left:61.30px;top:587.00px;font-size:14.6px;font-weight:normal;color:#454545;transform:scaleX(1.0076);-webkit-text-stroke:0.22px #454545;">View</span>
<span class="t" style="left:37.42px;top:609.00px;font-size:14.6px;font-weight:normal;color:#454545;transform:scaleX(1.0344);-webkit-text-stroke:0.22px #454545;">Report</span>
<svg style="left:41.2px;top:647.3px" width="12" height="12.8" viewBox="0 0 12 12.8"><rect x="1.2" y="0.3" width="9.6" height="4" rx="1.8" fill="#5c5c5c"/><rect x="0.1" y="2.8" width="11.8" height="4" rx="1.1" fill="#686868"/><rect x="1.1" y="6.4" width="9.8" height="5.6" fill="#a9a9a9"/><rect x="2.9" y="7" width="1" height="4.4" fill="#e6e6e6"/><rect x="5" y="7.1" width="4.6" height="3.7" fill="#fff"/><rect x="6.6" y="8.1" width="1.5" height="1.5" fill="#b0b0b0"/><rect x="0.4" y="11.5" width="11.4" height="1.2" fill="#8c8c8c"/></svg>
<span class="t" style="left:38.02px;top:665.00px;font-size:14.6px;font-weight:normal;color:#454545;transform:scaleX(1.0489);-webkit-text-stroke:0.22px #454545;">Second</span>
<span class="t" style="left:38.03px;top:687.00px;font-size:14.6px;font-weight:normal;color:#454545;transform:scaleX(1.0222);-webkit-text-stroke:0.22px #454545;">Store</span>
<span class="t" style="left:37.79px;top:708.00px;font-size:14.6px;font-weight:normal;color:#454545;transform:scaleX(1.0439);-webkit-text-stroke:0.22px #454545;">(Dual</span>
<span class="t" style="left:38.36px;top:730.00px;font-size:14.6px;font-weight:normal;color:#454545;transform:scaleX(1.0452);-webkit-text-stroke:0.22px #454545;">Tax)</span>
<svg style="left:40.9px;top:753px" width="12.4" height="9.1" viewBox="0 0 12.4 9.1"><path d="M0.2 4.55Q3 0.3 6.2 0.3Q9.4 0.3 12.2 4.55Q9.4 8.8 6.2 8.8Q3 8.8 0.2 4.55Z" fill="#1f93db"/><circle cx="6.1" cy="4.55" r="2.45" fill="#9fd2f2"/><circle cx="6.2" cy="4.6" r="1.25" fill="#1a86cf"/></svg>
<span class="t" style="left:61.30px;top:751.00px;font-size:14.6px;font-weight:normal;color:#454545;transform:scaleX(1.0076);-webkit-text-stroke:0.22px #454545;">View</span>
<span class="t" style="left:37.42px;top:773.00px;font-size:14.6px;font-weight:normal;color:#454545;transform:scaleX(1.0344);-webkit-text-stroke:0.22px #454545;">Report</span>
<svg style="left:41.2px;top:812.2px" width="12" height="12.8" viewBox="0 0 12 12.8"><rect x="1.2" y="0.3" width="9.6" height="4" rx="1.8" fill="#5c5c5c"/><rect x="0.1" y="2.8" width="11.8" height="4" rx="1.1" fill="#686868"/><rect x="1.1" y="6.4" width="9.8" height="5.6" fill="#a9a9a9"/><rect x="2.9" y="7" width="1" height="4.4" fill="#e6e6e6"/><rect x="5" y="7.1" width="4.6" height="3.7" fill="#fff"/><rect x="6.6" y="8.1" width="1.5" height="1.5" fill="#b0b0b0"/><rect x="0.4" y="11.5" width="11.4" height="1.2" fill="#8c8c8c"/></svg>
<span class="t" style="left:61.56px;top:813.00px;font-size:14.6px;font-weight:normal;color:#454545;transform:scaleX(1.0399);-webkit-text-stroke:0.22px #454545;">Third</span>
<span class="t" style="left:38.03px;top:835.00px;font-size:14.6px;font-weight:normal;color:#454545;transform:scaleX(1.0222);-webkit-text-stroke:0.22px #454545;">Store</span>
<span class="t" style="left:37.77px;top:856.00px;font-size:14.6px;font-weight:normal;color:#454545;transform:scaleX(1.0598);-webkit-text-stroke:0.22px #454545;">(Inclusive</span>
<span class="t" style="left:38.36px;top:878.00px;font-size:14.6px;font-weight:normal;color:#454545;transform:scaleX(1.0452);-webkit-text-stroke:0.22px #454545;">Tax)</span>
<div class="a" style="left:1835px;top:408px;width:8.8px;height:490px;background:#bcbdc1;border:1px solid #888a8d;border-radius:4.4px"></div>
<div class="a" style="left:1843.8px;top:402px;width:25px;height:480px;background:#f3f3f3"></div>
<div class="a" style="left:1749px;top:844px;width:84px;height:50px;background:#0e9588;border-radius:5px;box-shadow:0 0 9px 1px rgba(14,149,136,0.45)"></div>
<svg style="left:1763.2px;top:857.8px" width="17.4" height="17.4" viewBox="0 0 17.4 17.4"><circle cx="8.7" cy="8.7" r="8.7" fill="#fff"/><path d="M5.9 6.6Q5.9 4.2 8.7 4.2Q11.4 4.2 11.4 6.4Q11.4 7.8 9.8 8.6Q8.8 9.2 8.8 10.4" fill="none" stroke="#0e9588" stroke-width="1.9" stroke-linecap="round"/><circle cx="8.8" cy="13.1" r="1.25" fill="#0e9588"/></svg>
<span class="t" style="left:1785.40px;top:859.00px;font-size:17px;font-weight:normal;color:#fff;transform:scaleX(1.0588);-webkit-text-stroke:0.45px #fff;">Wiki</span>
<div class="a" style="left:1868px;top:72.8px;width:43.2px;height:810px;background:#fff;border-left:1.2px solid #e2e4e9"></div>
<svg style="left:1878px;top:104px" width="24" height="26" viewBox="0 0 24 26"><path d="M2 10.8H22L21 23Q20.9 24 19.8 24H4.2Q3.1 24 3 23Z" fill="#f8737c"/><path d="M12.1 2L13.9 6.6L18.9 6.9L15 10L16.3 14.8L12.1 12.1L7.9 14.8L9.2 10L5.3 6.9L10.3 6.6Z" fill="#f9c846" stroke="#f9c846" stroke-width="0.8" stroke-linejoin="round"/></svg>
<svg style="left:1877px;top:158px" width="26" height="26" viewBox="0 0 26 26"><rect x="1.1" y="1.9" width="18.7" height="12.2" rx="6" fill="#29b6f6"/><path d="M5.3 17.6Q5.3 11.6 11.3 11.6H17.8Q23.8 11.6 23.8 17.6V18.3Q23.8 24.3 17.8 24.3H5.3Z" fill="#a060e8"/></svg>
<svg style="left:1877px;top:213px" width="26" height="26" viewBox="0 0 26 26"><rect x="1.1" y="1.6" width="18.7" height="18.4" rx="1.6" fill="#fb923c"/><circle cx="17.6" cy="18.2" r="6" fill="#f7c736" fill-opacity="0.92"/></svg>
<svg style="left:1877px;top:266px" width="28" height="28" viewBox="0 0 28 28"><rect x="5" y="7.4" width="13.4" height="16.4" rx="1.4" fill="#a9abf7" transform="rotate(-20 11.7 15.6)"/><rect x="10.2" y="4.6" width="13.4" height="17" rx="1.6" fill="#7f8cf8" transform="rotate(12 16.9 13.1)"/></svg>
<svg style="left:1878px;top:326px" width="24" height="21" viewBox="0 0 24 21"><rect x="2.1" y="1.1" width="19.9" height="18.5" rx="1.6" fill="#3f4451"/><rect x="2.1" y="7.5" width="19.9" height="1.2" fill="#aeb2bb"/><rect x="1" y="10.9" width="22" height="6" rx="0.8" fill="#e30613"/></svg>
<div class="a" style="left:1872.3px;top:374.6px;width:35.4px;height:36.2px;background:#fff;border:1px solid #e4e6ea;border-radius:7px"></div>
<svg style="left:1881.9px;top:386px" width="16" height="16" viewBox="0 0 16 16" stroke="#5b6370" stroke-width="1.5" stroke-linecap="round"><path d="M8 0.6V15.4M0.6 8H15.4"/></svg>
<div class="a" style="left:1911px;top:13px;width:7px;height:870px;background:#f1f1f1;border-left:1px solid #d2d2d2"></div>
<div class="a" style="left:1911.6px;top:19.3px;width:9px;height:638px;background:#bebfc3;border:1px solid #8d8e92;border-radius:4px"></div>
<div class="a" style="left:1455.3px;top:118.6px;width:417.5px;height:75.2px;border:6px solid #e41a1c"></div>
</div></body></html>
